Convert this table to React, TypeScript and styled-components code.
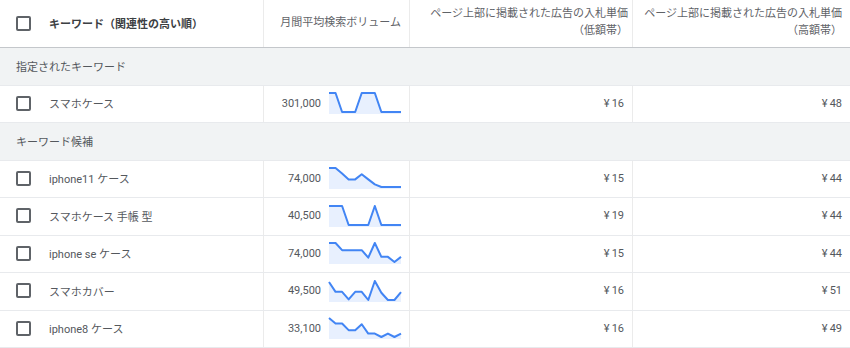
import React from "react";
import styled, { createGlobalStyle } from "styled-components";

const GlobalStyle = createGlobalStyle`
  html, body { margin: 0; padding: 0; background: #ffffff; }
  body { font-family: Roboto, "Noto Sans CJK JP", sans-serif; }
  * { box-sizing: border-box; }
`;

const COLS = "263px 146px 223px 1fr";

const Table = styled.div`
  width: 850px;
  display: flex;
  flex-direction: column;
  font-size: 11px;
  color: #54585d;
`;

const HeaderRow = styled.div`
  display: grid;
  grid-template-columns: ${COLS};
  height: 48px;
  border-bottom: 1px solid #c4c7cb;
`;

const HeaderCell = styled.div<{ $align?: "left" | "right"; $divider?: boolean; $pr?: number }>`
  display: flex;
  align-items: center;
  justify-content: ${(p) => (p.$align === "right" ? "flex-end" : "flex-start")};
  text-align: ${(p) => p.$align ?? "left"};
  padding: 0 ${(p) => p.$pr ?? 8}px 3px ${(p) => (p.$align === "right" ? "8px" : "16px")};
  border-left: ${(p) => (p.$divider ? "1px solid #ebebeb" : "none")};
  color: #5f6368;
  line-height: 17px;
`;

const HeaderLabel = styled.span`
  font-weight: 700;
  color: #3c4043;
`;

const TwoLine = styled.div`
  display: flex;
  flex-direction: column;
  align-items: flex-end;
`;

const GroupRow = styled.div`
  height: 37.5px;
  display: flex;
  align-items: center;
  padding-left: 16px;
  padding-bottom: 1px;
  background: #f1f3f4;
  border-bottom: 1px solid #e8eaed;
`;

const DataRow = styled.div`
  display: grid;
  grid-template-columns: ${COLS};
  height: 37.5px;
  border-bottom: 1px solid #e8eaed;
`;

const KeywordCell = styled.div`
  display: flex;
  align-items: center;
  padding-left: 16px;
  padding-bottom: 1px;
  gap: 18px;
`;

const VolumeCell = styled.div`
  display: flex;
  align-items: center;
  justify-content: flex-end;
  gap: 7px;
  padding-right: 7px;
  padding-bottom: 1px;
  border-left: 1px solid #ebebeb;
`;

const PriceCell = styled.div`
  display: flex;
  align-items: center;
  justify-content: flex-end;
  padding-right: 8px;
  padding-bottom: 1px;
  border-left: 1px solid #ebebeb;
`;

const Yen = styled.span`
  margin-right: 2px;
`;

const Checkbox = styled.span`
  display: inline-block;
  width: 15px;
  height: 15px;
  border: 2px solid #5f6368;
  border-radius: 2px;
  flex: none;
`;

const SparkSvg = styled.svg`
  display: block;
  flex: none;
`;

const Spark: React.FC<{ values: number[] }> = ({ values }) => {
  const w = 74;
  const h = 22;
  const step = (w - 2) / (values.length - 1);
  const pts = values.map((v, i) => [1 + i * step, 1 + v * 19] as const);
  const line = pts.map(([x, y]) => `${x.toFixed(2)},${y.toFixed(2)}`).join(" ");
  const area = `${line} ${pts[pts.length - 1][0].toFixed(2)},${h} ${pts[0][0].toFixed(2)},${h}`;
  return (
    <SparkSvg width={w} height={h} viewBox={`0 0 ${w} ${h}`}>
      <polygon points={area} fill="#e8f0fe" />
      <polyline points={line} fill="none" stroke="#4285f4" strokeWidth={2} strokeLinejoin="round" />
    </SparkSvg>
  );
};

type Row = { kw: string; vol: string; low: string; high: string; spark: number[] };

const specified: Row[] = [
  { kw: "スマホケース", vol: "301,000", low: "16", high: "48", spark: [0, 0, 1, 1, 1, 0, 0, 0, 1, 1, 1, 1] },
];

const candidates: Row[] = [
  { kw: "iphone11 ケース", vol: "74,000", low: "15", high: "44", spark: [0, 0, 0.29, 0.6, 0.6, 0.33, 0.6, 0.86, 1, 1, 1, 1] },
  { kw: "スマホケース 手帳 型", vol: "40,500", low: "19", high: "44", spark: [0, 0, 0, 1, 1, 1, 1, 0, 1, 1, 1, 1] },
  { kw: "iphone se ケース", vol: "74,000", low: "15", high: "44", spark: [0, 0, 0.375, 0.375, 0.375, 0.375, 0.77, 0, 0.73, 0.73, 1, 0.73] },
  { kw: "スマホカバー", vol: "49,500", low: "16", high: "51", spark: [0.05, 0.57, 0.57, 0.97, 0.57, 0.57, 1, 0, 0.62, 1, 1, 0.59] },
  { kw: "iphone8 ケース", vol: "33,100", low: "16", high: "49", spark: [0, 0.29, 0.29, 0.64, 0.64, 0.33, 0.82, 0.82, 1, 0.82, 1, 0.82] },
];

const KeywordRow: React.FC<{ row: Row }> = ({ row }) => (
  <DataRow>
    <KeywordCell>
      <Checkbox />
      <span>{row.kw}</span>
    </KeywordCell>
    <VolumeCell>
      <span>{row.vol}</span>
      <Spark values={row.spark} />
    </VolumeCell>
    <PriceCell>
      <Yen>¥</Yen>
      {row.low}
    </PriceCell>
    <PriceCell>
      <Yen>¥</Yen>
      {row.high}
    </PriceCell>
  </DataRow>
);

export default function App() {
  return (
    <>
      <GlobalStyle />
      <Table>
        <HeaderRow>
          <KeywordCell>
            <Checkbox />
            <HeaderLabel>キーワード（関連性の高い順）</HeaderLabel>
          </KeywordCell>
          <HeaderCell $align="right" $divider>
            月間平均検索ボリューム
          </HeaderCell>
          <HeaderCell $align="right" $divider $pr={4}>
            <TwoLine>
              <span>ページ上部に掲載された広告の入札単価</span>
              <span>（低額帯）</span>
            </TwoLine>
          </HeaderCell>
          <HeaderCell $align="right" $divider>
            <TwoLine>
              <span>ページ上部に掲載された広告の入札単価</span>
              <span>（高額帯）</span>
            </TwoLine>
          </HeaderCell>
        </HeaderRow>
        <GroupRow>指定されたキーワード</GroupRow>
        {specified.map((r) => (
          <KeywordRow key={r.kw} row={r} />
        ))}
        <GroupRow>キーワード候補</GroupRow>
        {candidates.map((r) => (
          <KeywordRow key={r.kw} row={r} />
        ))}
      </Table>
    </>
  );
}
